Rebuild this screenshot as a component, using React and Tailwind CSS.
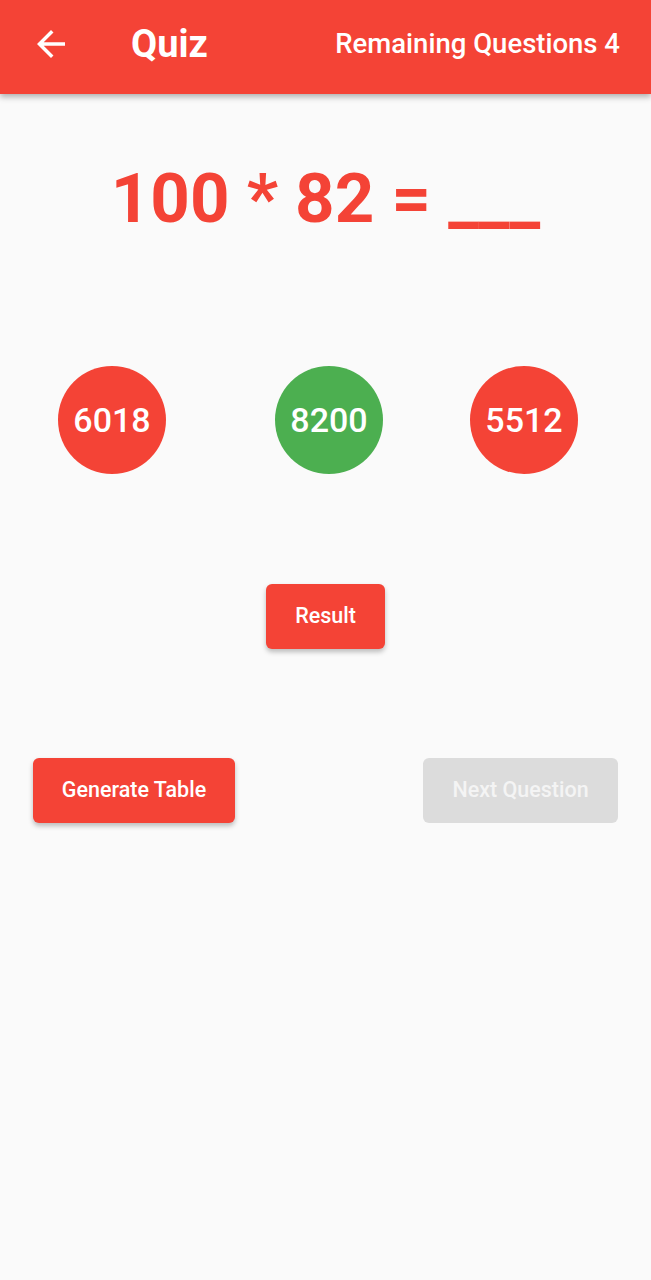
const RED = "bg-[#f44336]";

function BackArrow() {
	return (
		<svg width="42" height="42" viewBox="0 0 24 24" fill="white">
			<path d="M20 11H7.83l5.59-5.59L12 4l-8 8 8 8 1.41-1.41L7.83 13H20v-2z" />
		</svg>
	);
}

function Choice({ value, color }) {
	return (
		<div
			className={`w-[108px] h-[108px] rounded-full flex items-center justify-center text-white text-[34px] font-medium ${color}`}
		>
			{value}
		</div>
	);
}

export default function App() {
	return (
		<div className="min-h-[1280px] bg-[#fafafa] font-['Roboto',sans-serif]">
			<header className={`h-[94px] ${RED} flex items-center pb-[6px] pl-[30px] pr-[31px] shadow-[0_3px_6px_rgba(0,0,0,0.3)]`}>
				<BackArrow />
				<h1 className="ml-[59px] text-[38px] font-bold text-white leading-none">Quiz</h1>
				<span className="ml-auto text-[27.5px] font-medium text-white leading-none">
					Remaining Questions 4
				</span>
			</header>

			<div className="mt-[70px] text-center text-[69px] leading-none font-bold text-[#f44336]">
				100 * 82 = ___
			</div>

			<div className="mt-[133px] flex">
				<div className="ml-[58px]">
					<Choice value="6018" color={RED} />
				</div>
				<div className="ml-[109px]">
					<Choice value="8200" color="bg-[#4caf50]" />
				</div>
				<div className="ml-[87px]">
					<Choice value="5512" color={RED} />
				</div>
			</div>

			<div className="mt-[110px] flex justify-center">
				<button className={`w-[119px] h-[65px] rounded-[6px] ${RED} text-white text-[21.5px] font-medium shadow-[0_3px_5px_rgba(0,0,0,0.25)]`}>
					Result
				</button>
			</div>

			<div className="mt-[109px] flex justify-between pl-[33px] pr-[33px]">
				<button className={`w-[202px] h-[65px] rounded-[6px] ${RED} text-white text-[21.5px] font-medium shadow-[0_3px_5px_rgba(0,0,0,0.25)]`}>
					Generate Table
				</button>
				<button disabled className="w-[195px] h-[65px] rounded-[6px] bg-[#dcdcdc] text-[#f4f4f4] text-[21.5px] font-medium">
					Next Question
				</button>
			</div>
		</div>
	);
}
